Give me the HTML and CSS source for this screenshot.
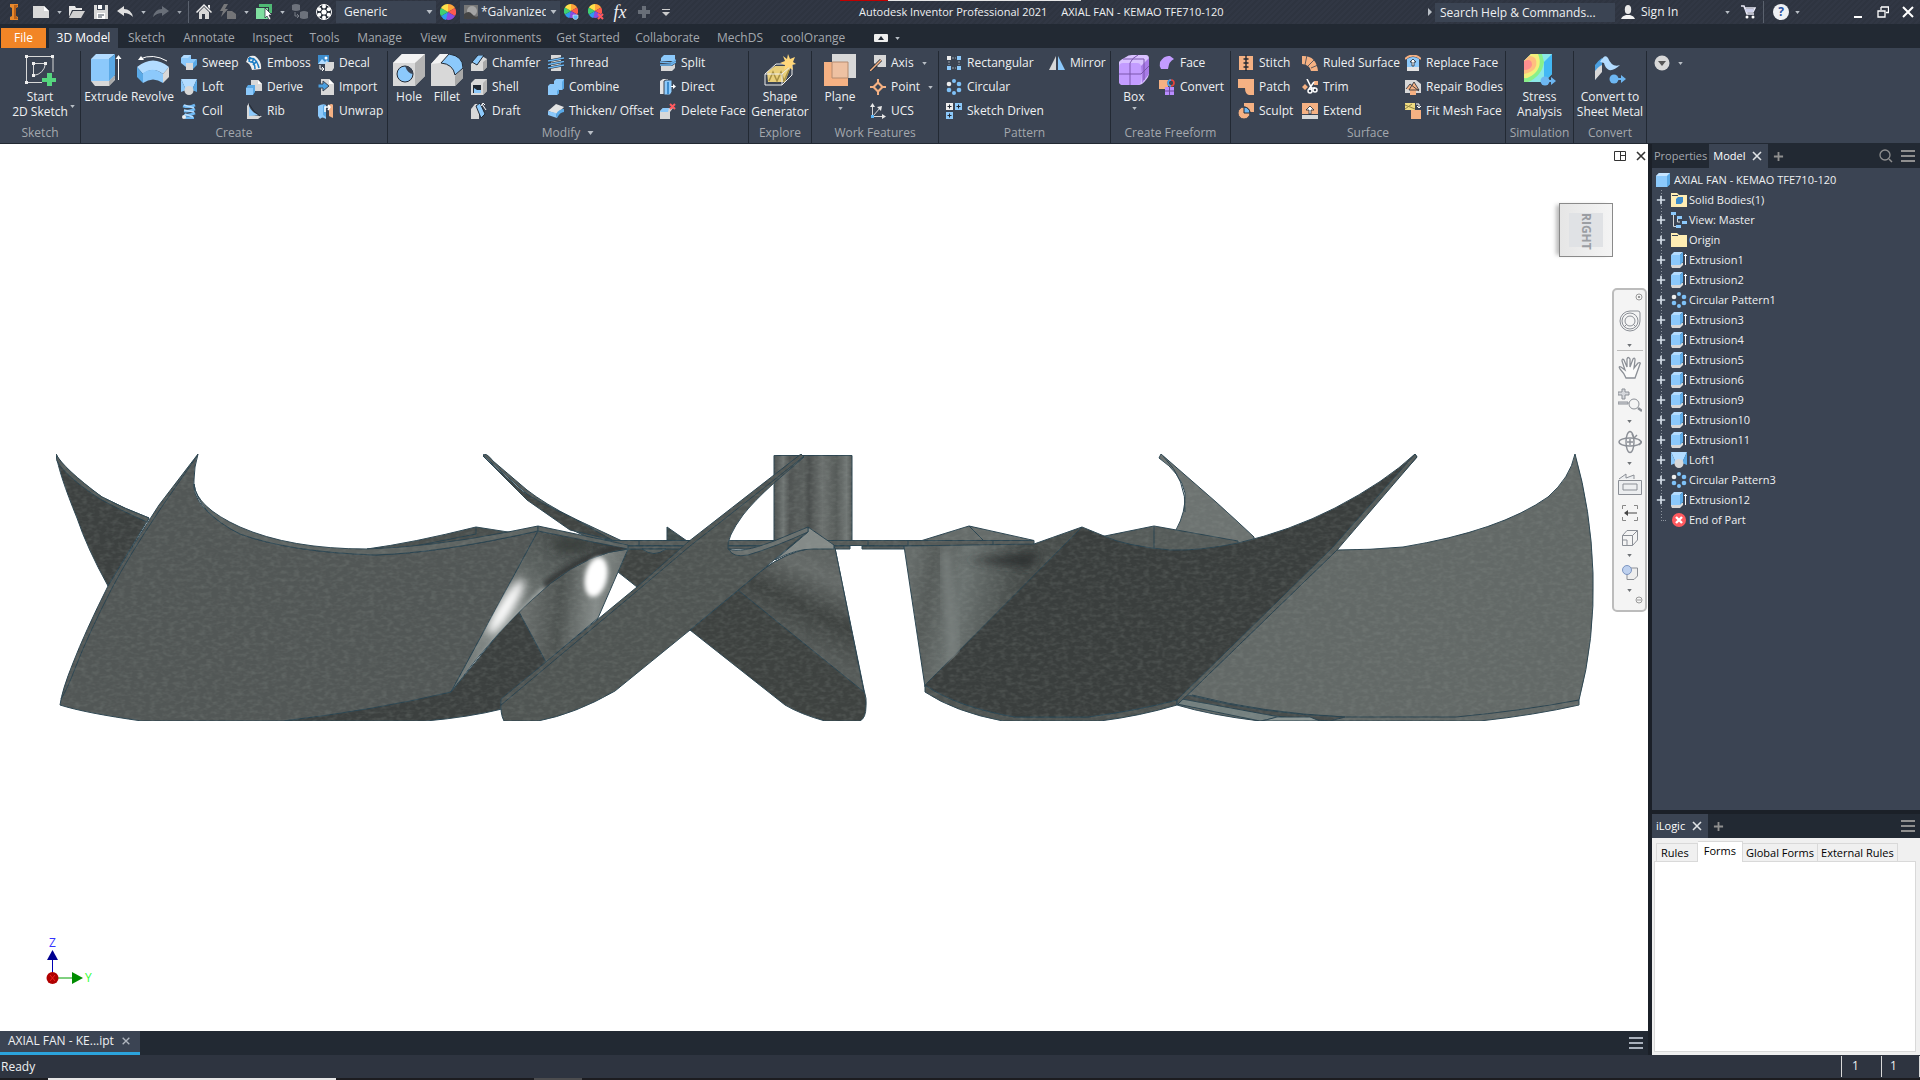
FILE: index.html
```html
<!DOCTYPE html>
<html lang="en">
<head>
<meta charset="utf-8">
<title>Autodesk Inventor Professional 2021 - AXIAL FAN - KEMAO TFE710-120</title>
<link rel="stylesheet" href="styles.css">
</head>
<body>
<svg class="defs" aria-hidden="true">
  <defs>
    <symbol id="caret" viewBox="0 0 6 4"><path d="M0 0H6L3 4Z" fill="#b9bfc6"/></symbol>
    <symbol id="cross" viewBox="0 0 12 12"><path d="M2 2L10 10M10 2L2 10" stroke="currentColor" stroke-width="1.6" fill="none"/></symbol>
    <symbol id="plus" viewBox="0 0 12 12"><path d="M1 6H11M6 1V11" stroke="currentColor" stroke-width="2" fill="none"/></symbol>
    <symbol id="burger" viewBox="0 0 14 12"><path d="M0 1H14M0 6H14M0 11H14" stroke="currentColor" stroke-width="2" fill="none"/></symbol>
    <symbol id="wheel" viewBox="0 0 16 16"><g transform="translate(8 8)"><path d="M0 0V-8A8 8 0 0 1 7 -4Z" fill="#ffa43a"/><path d="M0 0L7 -4A8 8 0 0 1 7 4Z" fill="#ff5a4e"/><path d="M0 0L7 4A8 8 0 0 1 0 8L-3 7Z" fill="#8a4be0"/><path d="M0 0L-2 8A8 8 0 0 1 -7 4Z" fill="#2f9bf0"/><path d="M0 0L-7 4A8 8 0 0 1 -7 -4Z" fill="#3fcf72"/><path d="M0 0L-7 -4A8 8 0 0 1 0 -8Z" fill="#ffe04a"/></g></symbol>

    <symbol id="extrude" viewBox="0 0 32 32"><path d="M1 27L5 32H19L25 26V22H1Z" fill="#d8d8d8"/><path d="M19 32L25 25V21L19 27Z" fill="#a9a9a9"/><path d="M1 5L6 0H25L19 5Z" fill="#b3dcff"/><path d="M1 5H19V27H1Z" fill="#8cc9fb"/><path d="M19 5L25 0V21L19 27Z" fill="#5aa9e6"/><path d="M28.500 26V3" stroke="#fff" fill="none"/><path d="M25.500 5L28.500 1L31.500 5Z" fill="#fff"/></symbol>
    <symbol id="extrusion" viewBox="0 0 16 16"><path d="M0 14L1 16H9L12 13V11H0Z" fill="#d8d8d8"/><path d="M0 3L3 0H12L9 3Z" fill="#b3dcff"/><path d="M0 3H9V13H0Z" fill="#8cc9fb"/><path d="M9 3L12 0V10L9 13Z" fill="#5aa9e6"/><path d="M14.500 13V2M13 3.500H16" stroke="#fff" fill="none"/></symbol>
    <symbol id="revolve" viewBox="0 0 32 32"><path d="M0 13Q16 0 32 13L26 20Q16 12 6 20Z" fill="#b3dcff"/><path d="M0 13L6 20V29L0 23Z" fill="#5aa9e6"/><path d="M6 19Q16 12 26 20V29Q16 22 6 29Z" fill="#8cc9fb"/><path d="M26 20L32 13V23L26 29Z" fill="#d8d8d8"/><path d="M3 5Q16 -1 30 7" stroke="#fff" fill="none"/><path d="M1 6L4 2L7 6Z" fill="#fff"/></symbol>
    <symbol id="start" viewBox="0 0 32 32"><g fill="none" stroke="#d8d8d8"><path d="M2.500 2V29M2 28.500H18M2 2.500H29V18"/><path d="M9.500 21.500V9.500H21.500Q20 20 9.500 21.500Z"/></g><g fill="#eee"><path d="M1 1h3v3H1zM27 1h3v3h-3zM1 27h3v3H1zM8 8h3v3H8zM20 8h3v3h-3zM8 20h3v3H8z"/></g><path d="M23 19h5v5h4v4h-4v4h-5v-4h-5v-4h5z" fill="#55d67e"/></symbol>
    <symbol id="sweep" viewBox="0 0 16 16"><path d="M0 3L3 0H10V4H16L13 8H5V12L0 8Z" fill="#8cc9fb"/><path d="M3 0H10L7 3H0Z" fill="#b3dcff"/><path d="M5 8H12V15H5Z" fill="#d8d8d8"/><path d="M12 8L16 4V10L12 14Z" fill="#5aa9e6"/></symbol>
    <symbol id="loft" viewBox="0 0 16 16"><path d="M0 0H16L11 11H5Z" fill="#b3dcff"/><path d="M0 0V13L5 11Z" fill="#8cc9fb"/><path d="M16 0V13L11 11Z" fill="#5aa9e6"/><circle cx="8" cy="11.500" r="4.500" fill="#d8d8d8"/></symbol>
    <symbol id="coil" viewBox="0 0 16 16"><path d="M2 3Q8 5 14 2M3 8Q8 9 14 6M3 12Q8 13 14 10M4 15H13" stroke="#6db7f2" stroke-width="2.600" fill="none"/><path d="M3 2L13 5M3 7L13 9M4 11L12 14" stroke="#b3dcff" stroke-width="1.500"/><circle cx="3" cy="14" r="2" fill="#eee"/></symbol>
    <symbol id="emboss" viewBox="0 0 16 16"><path d="M1 5Q2 0 9 1Q16 6 15 14L6 15Q4 8 0 7Z" fill="#eee"/><path d="M2 4Q10 1 13 13M4 7Q9 6 9 14M4 2L3 7M8 3L6 8M11 6L7 10" stroke="#1d7dc4" stroke-width="1.600" fill="none"/></symbol>
    <symbol id="derive" viewBox="0 0 16 16"><path d="M5 1H12L16 5V12H5Z" fill="#d8d8d8"/><path d="M12 1V5H16Z" fill="#fff"/><path d="M0 9L2 6H9V13L7 16H0Z" fill="#5aa9e6"/><path d="M0 9H7V16H0Z" fill="#8cc9fb"/></symbol>
    <symbol id="rib" viewBox="0 0 16 16"><path d="M1 3L3 0V12L16 13L12 16H1Z" fill="#d8d8d8"/><path d="M3 3Q6 10 13 12L3 13Z" fill="#8cc9fb"/><path d="M3 1Q7 9 14 13" stroke="#222933" fill="none"/></symbol>
    <symbol id="decal" viewBox="0 0 16 16"><path d="M0 0H11V9H0Z" fill="#3c8ccc"/><path d="M0 9L4 4L7 7L9 5L11 9Z" fill="#b3dcff"/><circle cx="8" cy="3" r="1.500" fill="#fff"/><path d="M7 9L9 7H16V13L14 16H7Z" fill="#d8d8d8"/><path d="M2 10V14H6M4 12L6 14L4 16" stroke="#fff" fill="none"/></symbol>
    <symbol id="import" viewBox="0 0 16 16"><path d="M3 0H11L16 5V16H3Z" fill="#d8d8d8"/><path d="M11 0V5H16Z" fill="#fff"/><path d="M0 5H5V2L11 7L5 12V9H0Z" fill="#4a9fe0" stroke="#3b4453"/></symbol>
    <symbol id="unwrap" viewBox="0 0 16 16"><path d="M0 3Q5 0 8 2V16Q4 13 2 16L0 13Z" fill="#8cc9fb"/><path d="M5 2L8 3V14L5 12Z" fill="#5aa9e6"/><path d="M11 2Q14 0 15 2V15L11 13Z" fill="#f5b183"/><path d="M7 9V4H12M10 2L12 4L10 7" stroke="#fff" stroke-width="1.500" fill="none"/></symbol>
    <symbol id="cube" viewBox="0 0 32 32"><path d="M0 9L9 0H32V22L22 32H0Z" fill="#d8d8d8"/><path d="M0 9L9 0H32L22 9Z" fill="#f3f3f3"/><path d="M22 9L32 0V22L22 32Z" fill="#b4b4b4"/></symbol>
    <symbol id="hole" viewBox="0 0 32 32"><use href="#cube"/><circle cx="12" cy="20" r="8" fill="#8cc9fb" stroke="#222933"/><path d="M12 12A8 8 0 0 1 20 20Q15 20 12 12Z" fill="#3b4453"/></symbol>
    <symbol id="fillet" viewBox="0 0 32 32"><path d="M0 10L9 0H20L32 14V24L24 32H0Z" fill="#d8d8d8"/><path d="M24 22L32 14V24L24 32Z" fill="#a9a9a9"/><path d="M10 9L18 0Q32 2 32 14L24 21Q22 10 10 9Z" fill="#8cc9fb" stroke="#222933"/><path d="M0 10L9 0H17L9 9Z" fill="#f3f3f3"/></symbol>
    <symbol id="chamfer" viewBox="0 0 16 16"><path d="M0 9L9 0L16 4V12L12 16H0Z" fill="#d8d8d8"/><path d="M1 7L7 0H13L6 10Z" fill="#8cc9fb" stroke="#222933"/><path d="M12 7L16 4V12L12 16Z" fill="#a9a9a9"/></symbol>
    <symbol id="shell" viewBox="0 0 16 16"><path d="M0 4L4 0H16V12L12 16H0Z" fill="#d8d8d8"/><path d="M12 4L16 0V12L12 16Z" fill="#b4b4b4"/><path d="M2 6H10V14H2Z" fill="#1f2732"/><path d="M3 9L6 11V14H3ZM6 11H10V14H6Z" fill="#8cc9fb"/></symbol>
    <symbol id="draft" viewBox="0 0 16 16"><path d="M0 6L4 1H8V16H0Z" fill="#d8d8d8"/><path d="M5 3L9 0L14 11L10 15Z" fill="#8cc9fb" stroke="#222933"/><path d="M11 1L15 7M10 3L12 0L14 2" stroke="#fff" fill="none"/></symbol>
    <symbol id="thread" viewBox="0 0 16 16"><path d="M3 0H13V16H3Z" fill="#d8d8d8"/><path d="M0 6L16 3M0 9.500L16 6.500M0 13L16 10" stroke="#222933" stroke-width="2.600"/><path d="M0 6L16 3M0 9.500L16 6.500M0 13L16 10" stroke="#6db7f2" stroke-width="1.600"/></symbol>
    <symbol id="combine" viewBox="0 0 16 16"><path d="M6 2L8 0H16V9L14 11H11V14L9 16H0V7L2 5H6Z" fill="#8cc9fb"/><path d="M14 3L16 0V9L14 11ZM9 12L11 10V14L9 16Z" fill="#5aa9e6"/></symbol>
    <symbol id="thicken" viewBox="0 0 16 16"><path d="M0 8L8 1L16 4L9 11Z" fill="#e3e3e3"/><path d="M0 8L8 10L9 15L0 12Z" fill="#8cc9fb"/><path d="M8 11Q11 6 16 6V9Q12 9 9 15Z" fill="#5aa9e6"/></symbol>
    <symbol id="split" viewBox="0 0 16 16"><path d="M1 3L4 0H15V6H1Z" fill="#8cc9fb"/><path d="M0 7L11 8L16 5M0 10L11 10L16 7" stroke="#6db7f2" stroke-width="1.500" fill="none"/><path d="M1 11H12L15 9V13L12 16H1Z" fill="#d8d8d8"/></symbol>
    <symbol id="direct" viewBox="0 0 16 16"><path d="M0 2L3 0H8V15H0Z" fill="#e3e3e3"/><path d="M4 2L6 1H12V13L10 16H4Z" fill="#8cc9fb" stroke="#3b4453"/><path d="M8 3V15" stroke="#3c8ccc" stroke-width="2"/><path d="M11 7.500H14" stroke="#fff"/><path d="M13 5L16 7.500L13 10Z" fill="#fff"/></symbol>
    <symbol id="delface" viewBox="0 0 16 16"><path d="M0 8L3 5H13L10 9V16H0Z" fill="#d8d8d8"/><path d="M1 7L3 5H9L8 9H0Z" fill="#8cc9fb"/><path d="M10 1L15 6M15 1L10 6" stroke="#ff5a5f" stroke-width="2"/></symbol>
    <symbol id="shape" viewBox="0 0 32 32"><path d="M3 18L11 12H27L21 28H4Z" fill="#e9cf7b"/><path d="M5 27L9 18L13 27L17 18L20 27L25 16" stroke="#a78f43" fill="none" stroke-width="1.500"/><path d="M1 20L12 10H28V21L18 31H1ZM1 20H18V31M18 20L28 11" stroke="#eee" fill="none"/><path d="M24 0L26 5L31 3L29 8L32 10L28 11L29 16L24 13L20 16L21 11L16 9L21 7L19 2L23 5Z" fill="#ffd77a"/></symbol>
    <symbol id="plane" viewBox="0 0 32 32"><path d="M8 0H32V24H8Z" fill="#d8d8d8"/><path d="M0 8H24V32H0Z" fill="#f5b183"/><path d="M8 8H24V24H8Z" fill="#eec1a2" stroke="#b58c70"/></symbol>
    <symbol id="axis" viewBox="0 0 16 16"><path d="M4 0H16V12H8L4 8Z" fill="#d8d8d8"/><path d="M0 16L11 5" stroke="#222933" stroke-width="3"/><path d="M0 16L11 5" stroke="#f5b183" stroke-width="1.500"/></symbol>
    <symbol id="point" viewBox="0 0 16 16"><path d="M8 0V16M0 8H16" stroke="#f5b183" stroke-width="2"/><path d="M8 2L14 8L8 14L2 8Z" fill="#f5b183"/><path d="M8 5L11 8L8 11L5 8Z" fill="#3b4453"/></symbol>
    <symbol id="ucs" viewBox="0 0 16 16"><path d="M2.500 14V2M2 13.500H14M3 13L10 5" stroke="#d8d8d8" fill="none"/><path d="M0 4L2.500 0L5 4ZM12 11L16 13.500L12 16ZM7 4L12 3L11 8Z" fill="#e8e8e8"/><path d="M1 12h3v3H1z" fill="#5ab4f5"/></symbol>
    <symbol id="rect" viewBox="0 0 16 16"><g fill="#8cc9fb"><path d="M11 1h4v4h-4zM1 11h4v4H1zM11 11h4v4h-4z"/></g><path d="M1 1h4v4H1z" fill="#eee"/><path d="M6 3H10M3 6V10M13 6V10M6 13H10" stroke="#9ba3ad" stroke-dasharray="2 1"/></symbol>
    <symbol id="circ" viewBox="0 0 16 16"><g fill="#7fc1f7"><circle cx="8" cy="2" r="2"/><circle cx="13" cy="5" r="2.300"/><circle cx="13" cy="11" r="2.300"/><circle cx="8" cy="14" r="2"/><circle cx="3" cy="11" r="2.300"/></g><circle cx="3" cy="5" r="2.300" fill="#eee"/></symbol>
    <symbol id="driven" viewBox="0 0 16 16"><path d="M0 0h7v7H0z" fill="#eee"/><path d="M9 0h7v7H9zM0 9h7v7H0z" fill="#8cc9fb"/><path d="M1.500 3.500h4M3.500 1.500v4M10.500 3.500h4M12.500 1.500v4M1.500 12.500h4M3.500 10.500v4" stroke="#222933"/></symbol>
    <symbol id="mirror" viewBox="0 0 16 16"><path d="M7 1V15H0Z" fill="#d8d8d8"/><path d="M9 1V15H16Z" fill="#8cc9fb"/></symbol>
    <symbol id="box" viewBox="0 0 32 32"><path d="M1 8Q2 6 8 3Q10 1 14 1H28Q31 1 31 5V20Q30 25 24 30Q22 31 20 31H5Q1 31 1 27Z" fill="#d9c2ff"/><rect x="1" y="9" width="22" height="22" rx="4" fill="#c39cff"/><path d="M23 12L31 4V20L24 29Z" fill="#a97be8"/><path d="M12 9V31M1 20H23L31 12M12 9Q14 4 20 1M5 5H26M26 5V26" stroke="#7a56ad" fill="none"/></symbol>
    <symbol id="face" viewBox="0 0 16 16"><path d="M1 7Q5 0 11 1L15 4Q10 6 9 14L2 14Q0 11 1 7Z" fill="#c39cff"/></symbol>
    <symbol id="convert" viewBox="0 0 16 16"><path d="M0 1H9V10H0Z" fill="#f5b183"/><path d="M6 8H15V16H6Z" fill="#b98cff"/><path d="M10.500 8V16M6 12H15" stroke="#6a4a9a"/><circle cx="12" cy="4" r="3" fill="none" stroke="#e8443c" stroke-width="1.700"/><path d="M12 1A3 3 0 0 0 12 7" fill="none" stroke="#3fa8f0" stroke-width="1.700"/></symbol>
    <symbol id="stitch" viewBox="0 0 16 16"><path d="M1 1H15V15H1Z" fill="#f5b183"/><path d="M8 0V16M5.500 4H10.500M5.500 8H10.500M5.500 12H10.500" stroke="#222933" stroke-width="1.400"/></symbol>
    <symbol id="patch" viewBox="0 0 16 16"><path d="M0 0H16V16H11Q7 15 7 9H0Z" fill="#f5b183"/></symbol>
    <symbol id="sculpt" viewBox="0 0 16 16"><path d="M6 0H16V9H6Z" fill="#f5b183"/><circle cx="6" cy="10" r="6" fill="#f5b183" stroke="#3b4453"/><path d="M6 4V10H12A6 6 0 0 0 6 4Z" fill="#6db7f2" stroke="#222933"/></symbol>
    <symbol id="ruled" viewBox="0 0 16 16"><path d="M0 1Q14 0 16 16H9Q8 10 0 9Z" fill="#f5b183"/><path d="M5 0L3 10M12 5L6 11M16 10L9 13" stroke="#3b4453" stroke-width=".8"/></symbol>
    <symbol id="trim" viewBox="0 0 16 16"><path d="M3 5L6 8L3 11L0 8ZM12 2H16V6H12Z" fill="#f5b183"/><path d="M5 0L10 10M12 3L7 10M9 9H13" stroke="#fff" stroke-width="1.600"/><circle cx="8" cy="12" r="2" fill="none" stroke="#fff" stroke-width="1.500"/><circle cx="13" cy="11" r="2" fill="none" stroke="#fff" stroke-width="1.500"/></symbol>
    <symbol id="extend" viewBox="0 0 16 16"><path d="M0 0H16V11H0Z" fill="#f5b183"/><path d="M0 12H16V16H0Z" fill="#d8d8d8"/><path d="M8 3L12 7H9V11H7V7H4Z" fill="#fff" stroke="#222933" stroke-width=".8"/></symbol>
    <symbol id="replace" viewBox="0 0 16 16"><path d="M0 4Q8 -3 16 4" stroke="#f5b183" stroke-width="2" fill="none"/><path d="M2 4Q8 0 14 4V12H2Z" fill="#8cc9fb"/><path d="M2 12H14V16H2Z" fill="#e3e3e3"/><path d="M8 4L11 7H9V11H7V7H5Z" fill="#fff" stroke="#222933" stroke-width=".8"/></symbol>
    <symbol id="repair" viewBox="0 0 16 16"><path d="M0 1H11L16 5V14H0Z" fill="#d8d8d8"/><path d="M5 9V16H11V9Z" fill="#f5b183"/><path d="M1 10L5 5L14 12M4 11L9 3L14 11Z" stroke="#222933" fill="#f5b183" stroke-width=".8"/></symbol>
    <symbol id="mesh" viewBox="0 0 16 16"><path d="M0 0H10V7H0Z" fill="#f0dc82"/><path d="M0 2L10 6M0 6L7 1" stroke="#8f8243"/><path d="M6 7H16V16H6Z" fill="#f5b183"/><path d="M11 1H14V5M12 3L14 5L16 3" stroke="#fff" fill="none"/></symbol>
    <symbol id="stress" viewBox="0 0 32 32"><path d="M0 7L7 0H28V20L20 28H0Z" fill="#8be8e8"/><path d="M20 8L28 0V20L20 28Z" fill="#42b8f5"/><path d="M0 7L7 0H18L20 8Q18 22 4 28H0Z" fill="#8af08a"/><path d="M0 7L7 0H14Q19 12 10 20Q4 25 0 24Z" fill="#f3f07c"/><path d="M0 7L5 2Q14 2 12 12Q10 18 0 20Z" fill="#ffbf7f"/><path d="M0 7Q8 4 8 11Q7 16 0 16Z" fill="#ff8f8f"/><circle cx="21" cy="27" r="4.500" fill="#6db7f2"/><path d="M24 26H27V23L32 27L27 31V28H24Z" fill="#6db7f2"/></symbol>
    <symbol id="sheet" viewBox="0 0 32 32"><path d="M1 11Q5 6 8 4V16L1 26Z" fill="#4a9fe0"/><path d="M1 17Q5 12 8 11V18L1 26Z" fill="#d8d8d8"/><path d="M6 8Q11 -1 14 4Q18 14 26 11Q20 17 15 16Q11 14 10 9Z" fill="#b3dcff"/><circle cx="20" cy="25" r="4.500" fill="#6db7f2"/><path d="M24 24H27V21L32 25L27 29V26H24Z" fill="#6db7f2"/></symbol>
    <symbol id="folder" viewBox="0 0 16 16"><path d="M0 1H6L8 3H16V15H0Z" fill="#ffedb3"/><path d="M1 3.500H7" stroke="#3b4453"/></symbol>
    <symbol id="solid" viewBox="0 0 16 16"><use href="#folder"/><path d="M5 7L7 5H12V10L10 12H5Z" fill="#3c8ccc"/></symbol>
    <symbol id="view" viewBox="0 0 16 16"><path d="M2.500 3V14.500H5M6.500 6V10H9" stroke="#d8d8d8" fill="none"/><path d="M0 0h5v3H0zM6 4h5v3H6zM11 9h5v3h-5zM5 13h5v3H5z" fill="#8cc9fb"/></symbol>
    <symbol id="part" viewBox="0 0 16 16"><path d="M1 4L4 1H15V12L12 15H1Z" fill="#8cc9fb"/><path d="M1 4L4 1H15L12 4Z" fill="#c5e4ff"/><path d="M12 4L15 1V12L12 15Z" fill="#5aa9e6"/></symbol>
    <symbol id="end" viewBox="0 0 16 16"><circle cx="8" cy="8" r="7" fill="#ff5a5f"/><path d="M5 5L11 11M11 5L5 11" stroke="#fff" stroke-width="2.400"/></symbol>
  </defs>
</svg>

<div class="app">
  <header class="titlebar">
    <div class="quick">
      <svg class="logo" viewBox="0 0 10 16"><path d="M1 0H9V3L7 4V12L9 13V16H1V13L3 12V4L1 3Z" fill="#e8892c"/><path d="M5 1H9L7 4V12L9 15H5Z" fill="#b8601a"/></svg>
      <button class="q" aria-label="New"><svg class="i16" viewBox="0 0 16 16"><path d="M0 2H11L16 7V14H0Z" fill="#d8d8d8"/><path d="M11 2V7H16Z" fill="#fff"/></svg></button>
      <button class="drop" aria-label="New options"><svg><use href="#caret"/></svg></button>
      <button class="q" aria-label="Open"><svg class="i16" viewBox="0 0 16 16"><path d="M0 2H6L7 4H13V6H3L0 13Z" fill="#e8e8e8"/><path d="M4 7H16L12 14H0Z" fill="#d0d0d0"/></svg></button>
      <button class="q" aria-label="Save"><svg class="i16" viewBox="0 0 16 16"><path d="M1 1H15V15H1Z" fill="#d8d8d8"/><path d="M4 1H12V6H4Z" fill="#3b4453"/><path d="M5 1H9V5H5ZM4 9H12V15H4Z" fill="#fff"/><path d="M5 11H11M5 13H9" stroke="#3b4453"/></svg></button>
      <button class="q" aria-label="Undo"><svg class="i16" viewBox="0 0 16 16"><path d="M0 7L7 2V5Q14 5 16 13Q12 9 7 9V12Z" fill="#e0e0e0"/></svg></button>
      <button class="drop" aria-label="Undo list"><svg><use href="#caret"/></svg></button>
      <button class="q dim" aria-label="Redo"><svg class="i16" viewBox="0 0 16 16"><path d="M16 7L9 2V5Q2 5 0 13Q4 9 9 9V12Z" fill="#777d86"/></svg></button>
      <button class="drop dim" aria-label="Redo list"><svg><use href="#caret"/></svg></button>
      <span class="vr"></span>
      <button class="q" aria-label="Home"><svg class="i16" viewBox="0 0 16 16"><path d="M8 0L16 8L15 9L8 2L1 9L0 8Z" fill="#eee"/><path d="M3 8L8 3L13 8V15H9V10H6V15H3Z" fill="#d8d8d8"/><path d="M12 1h2v4l-2-2z" fill="#eee"/></svg></button>
      <button class="q dim" aria-label="Update"><svg class="i16" viewBox="0 0 16 16"><path d="M4 0H8L5 5H8L1 13L3 7H0Z" fill="#888"/><path d="M7 7H12L16 10V15H7Z" fill="#858585"/></svg></button>
      <button class="drop" aria-label="Update options"><svg><use href="#caret"/></svg></button>
      <button class="q" aria-label="Select"><svg class="i16" viewBox="0 0 16 16"><path d="M3 0H16V9H13V3H3Z" fill="#4fb974"/><path d="M0 4H12V15H0Z" fill="#7fe0a0"/><path d="M9 4L16 11H13L15 15L13 16L11 12L9 14Z" fill="#fff" stroke="#222933" stroke-width=".7"/></svg></button>
      <button class="drop" aria-label="Selection filter"><svg><use href="#caret"/></svg></button>
      <button class="q dim" aria-label="Replace"><svg class="i16" viewBox="0 0 16 16"><path d="M0 1Q4 -1 8 1V6Q4 8 0 6ZM8 8Q12 6 16 8V14Q12 16 8 14Z" fill="#7c818a"/><path d="M3 8V12H7M5 10L7 12L5 14" stroke="#8b9098" fill="none"/></svg></button>
      <button class="q" aria-label="Material"><svg class="i16" viewBox="0 0 16 16"><circle cx="8" cy="8" r="7.500" fill="#222933" stroke="#fff"/><g fill="#fff"><circle cx="8" cy="8" r="2.600"/><circle cx="8" cy="2.500" r="2"/><circle cx="8" cy="13.500" r="2"/><circle cx="3.300" cy="5.300" r="2"/><circle cx="12.700" cy="5.300" r="2"/><circle cx="3.300" cy="10.700" r="2"/><circle cx="12.700" cy="10.700" r="2"/></g></svg></button>
      <span class="combo"><select aria-label="Material"><option>Generic</option></select><svg class="combo-caret"><use href="#caret"/></svg></span>
      <button class="q" aria-label="Appearance"><svg class="i16"><use href="#wheel"/></svg></button>
      <span class="combo combo-b"><svg class="ball" viewBox="0 0 14 14"><path d="M0 0H14V14H0Z" fill="#777"/><circle cx="8" cy="6" r="5" fill="#a4a4a4"/><path d="M0 9Q5 5 8 9T14 11V14H0Z" fill="#444"/></svg><select aria-label="Appearance"><option>*Galvanized</option></select><svg class="combo-caret"><use href="#caret"/></svg></span>
      <button class="q" aria-label="Adjust"><svg class="i16" viewBox="0 0 16 16"><use href="#wheel" width="14" height="14"/><path d="M9 11H14V14L11.500 16L9 14Z" fill="#5ab4f5" stroke="#eee" stroke-width=".6"/></svg></button>
      <button class="q" aria-label="Clear"><svg class="i16" viewBox="0 0 16 16"><use href="#wheel" width="14" height="14"/><path d="M10 10L15 15M15 10L10 15" stroke="#ff5a5f" stroke-width="2"/></svg></button>
      <button class="q fx" aria-label="Parameters">fx</button>
      <button class="q dim" aria-label="Add"><svg class="i12" viewBox="0 0 12 12"><path d="M4 0h4v4h4v4H8v4H4V8H0V4h4z" fill="#777d86"/></svg></button>
      <button class="drop more" aria-label="Customize"><svg viewBox="0 0 8 7"><path d="M0 0.500H8" stroke="#ccc"/><path d="M0 3H8L4 7Z" fill="#ccc"/></svg></button>
    </div>
    <div class="titles"><span>Autodesk Inventor Professional 2021</span><span>AXIAL FAN - KEMAO TFE710-120</span></div>
    <div class="account">
      <svg class="tri" viewBox="0 0 4 8"><path d="M0 0L4 4L0 8Z" fill="#b9bfc6"/></svg>
      <input class="search" type="text" aria-label="Search" placeholder="Search Help &amp; Commands...">
      <button class="signin"><svg class="i14" viewBox="0 0 14 14"><ellipse cx="7" cy="4.500" rx="3.200" ry="4.500" fill="#e8e8e8"/><path d="M0 14Q1 11 5 10H9Q13 11 14 14Z" fill="#f4f4f4"/></svg>Sign In<svg class="dropcaret"><use href="#caret"/></svg></button>
      <button class="q" aria-label="App store"><svg class="i16" viewBox="0 0 16 16"><path d="M1 2H4L7 10H14M4 4H15L13 8H6" stroke="#e8e8f4" stroke-width="1.600" fill="none"/><path d="M5 5H14L13 8H6Z" fill="#cdd0ea"/><circle cx="7" cy="13" r="1.500" fill="#fff"/><circle cx="13" cy="13" r="1.500" fill="#fff"/></svg></button>
      <span class="vr"></span>
      <button class="help" aria-label="Help">?</button>
      <button class="drop" aria-label="Help options"><svg><use href="#caret"/></svg></button>
      <button class="win win-min" aria-label="Minimize"><svg viewBox="0 0 12 12"><path d="M2 11H10" stroke="#fff" stroke-width="2"/></svg></button>
      <button class="win" aria-label="Restore"><svg viewBox="0 0 12 12"><path d="M4 1H11.500V6.500H9M4 1V4M1 5H8V11H1Z" stroke="#fff" fill="none" stroke-width="1.300"/></svg></button>
      <button class="win" aria-label="Close"><svg viewBox="0 0 12 12"><path d="M1 1L11 11M11 1L1 11" stroke="#fff" stroke-width="2"/></svg></button>
    </div>
    <div class="topstrip"></div>
  </header>

  <nav class="tabs" aria-label="Ribbon">
    <button class="file">File</button><button class="on">3D Model</button><button>Sketch</button><button>Annotate</button><button>Inspect</button><button>Tools</button><button>Manage</button><button>View</button><button>Environments</button><button>Get Started</button><button>Collaborate</button><button>MechDS</button><button>coolOrange</button>
    <button class="mini" aria-label="Minimize ribbon"><svg class="mini-box" viewBox="0 0 14 8"><rect width="14" height="8" rx="1" fill="#eee"/><path d="M4 6L7 2L10 6Z" fill="#222933"/></svg><svg class="mini-caret"><use href="#caret"/></svg></button>
  </nav>

  <section class="ribbon">
    <div class="group g-sketch"><div class="body"><button class="big"><svg><use href="#start"/></svg><span>Start<br>2D Sketch</span><svg class="side"><use href="#caret"/></svg></button></div><h2>Sketch</h2></div>
    <div class="group g-create"><div class="body">
      <button class="big"><svg><use href="#extrude"/></svg><span>Extrude</span></button>
      <button class="big"><svg><use href="#revolve"/></svg><span>Revolve</span></button>
      <div class="tools pad"><button><svg><use href="#sweep"/></svg>Sweep</button><button><svg><use href="#loft"/></svg>Loft</button><button><svg><use href="#coil"/></svg>Coil</button></div>
      <div class="tools"><button><svg><use href="#emboss"/></svg>Emboss</button><button><svg><use href="#derive"/></svg>Derive</button><button><svg><use href="#rib"/></svg>Rib</button></div>
      <div class="tools"><button><svg><use href="#decal"/></svg>Decal</button><button><svg><use href="#import"/></svg>Import</button><button><svg><use href="#unwrap"/></svg>Unwrap</button></div>
    </div><h2>Create</h2></div>
    <div class="group g-modify"><div class="body">
      <button class="big"><svg><use href="#hole"/></svg><span>Hole</span></button>
      <button class="big"><svg><use href="#fillet"/></svg><span>Fillet</span></button>
      <div class="tools pad"><button><svg><use href="#chamfer"/></svg>Chamfer</button><button><svg><use href="#shell"/></svg>Shell</button><button><svg><use href="#draft"/></svg>Draft</button></div>
      <div class="tools"><button><svg><use href="#thread"/></svg>Thread</button><button><svg><use href="#combine"/></svg>Combine</button><button><svg><use href="#thicken"/></svg>Thicken/ Offset</button></div>
      <div class="tools"><button><svg><use href="#split"/></svg>Split</button><button><svg><use href="#direct"/></svg>Direct</button><button><svg><use href="#delface"/></svg>Delete Face</button></div>
    </div><h2>Modify <svg class="title-caret"><use href="#caret"/></svg></h2></div>
    <div class="group g-explore"><div class="body"><button class="big"><svg><use href="#shape"/></svg><span>Shape<br>Generator</span></button></div><h2>Explore</h2></div>
    <div class="group g-work"><div class="body">
      <button class="big"><svg><use href="#plane"/></svg><span>Plane</span><svg class="under"><use href="#caret"/></svg></button>
      <div class="tools tight"><button><svg><use href="#axis"/></svg>Axis<svg class="dropcaret"><use href="#caret"/></svg></button><button><svg><use href="#point"/></svg>Point<svg class="dropcaret"><use href="#caret"/></svg></button><button><svg><use href="#ucs"/></svg>UCS</button></div>
    </div><h2>Work Features</h2></div>
    <div class="group g-pattern"><div class="body">
      <div class="tools pad"><button><svg><use href="#rect"/></svg>Rectangular</button><button><svg><use href="#circ"/></svg>Circular</button><button><svg><use href="#driven"/></svg>Sketch Driven</button></div>
      <div class="tools"><button><svg><use href="#mirror"/></svg>Mirror</button></div>
    </div><h2>Pattern</h2></div>
    <div class="group g-free"><div class="body">
      <button class="big"><svg><use href="#box"/></svg><span>Box</span><svg class="under"><use href="#caret"/></svg></button>
      <div class="tools tight"><button><svg><use href="#face"/></svg>Face</button><button><svg><use href="#convert"/></svg>Convert</button></div>
    </div><h2>Create Freeform</h2></div>
    <div class="group g-surface"><div class="body">
      <div class="tools pad"><button><svg><use href="#stitch"/></svg>Stitch</button><button><svg><use href="#patch"/></svg>Patch</button><button><svg><use href="#sculpt"/></svg>Sculpt</button></div>
      <div class="tools"><button><svg><use href="#ruled"/></svg>Ruled Surface</button><button><svg><use href="#trim"/></svg>Trim</button><button><svg><use href="#extend"/></svg>Extend</button></div>
      <div class="tools"><button><svg><use href="#replace"/></svg>Replace Face</button><button><svg><use href="#repair"/></svg>Repair Bodies</button><button><svg><use href="#mesh"/></svg>Fit Mesh Face</button></div>
    </div><h2>Surface</h2></div>
    <div class="group g-sim"><div class="body"><button class="big"><svg><use href="#stress"/></svg><span>Stress<br>Analysis</span></button></div><h2>Simulation</h2></div>
    <div class="group g-conv"><div class="body"><button class="big"><svg><use href="#sheet"/></svg><span>Convert to<br>Sheet Metal</span></button></div><h2>Convert</h2></div>
    <div class="tools pad"><button aria-label="Panels"><svg viewBox="0 0 16 16"><circle cx="8" cy="8" r="7.500" fill="#d8d8d8"/><path d="M4 6H12L8 11Z" fill="#555"/></svg><svg class="dropcaret"><use href="#caret"/></svg></button></div>
  </section>

  <main class="work">
    <section class="left">
      <div class="canvas">
        <svg class="fan" viewBox="0 144 1648 887" role="img" aria-label="Axial fan, side view">
          <defs>
            <filter id="grain" x="0" y="0" width="1" height="1" color-interpolation-filters="sRGB">
              <feTurbulence type="fractalNoise" baseFrequency=".16 .28" numOctaves="2" seed="4"/>
              <feColorMatrix values="0 0 0 0 .62  0 0 0 0 .65  0 0 0 0 .63  .42 0 0 0 -.17"/>
              <feComposite in2="SourceGraphic" operator="in" result="n"/>
              <feMerge><feMergeNode in="SourceGraphic"/><feMergeNode in="n"/></feMerge>
            </filter>
            <filter id="soft" x="-50%" y="-50%" width="200%" height="200%"><feGaussianBlur stdDeviation="4"/></filter>
            <filter id="glow" x="-50%" y="-50%" width="200%" height="200%"><feGaussianBlur stdDeviation="2"/></filter>
            <linearGradient id="cyl"><stop offset="0" stop-color="#4c5150"/><stop offset=".12" stop-color="#6f7573"/><stop offset=".2" stop-color="#505453"/><stop offset=".38" stop-color="#5a5f5d"/><stop offset=".45" stop-color="#4a4e4d"/><stop offset=".62" stop-color="#6c716f"/><stop offset=".8" stop-color="#565b59"/><stop offset=".93" stop-color="#727876"/><stop offset="1" stop-color="#555a58"/></linearGradient>
            <linearGradient id="faceI" gradientUnits="userSpaceOnUse" x1="835" y1="548" x2="790" y2="640"><stop offset="0" stop-color="#5a5f5d"/><stop offset=".3" stop-color="#666b69"/><stop offset=".65" stop-color="#3f4341"/><stop offset="1" stop-color="#565b59"/></linearGradient>
            <linearGradient id="faceD" gradientUnits="userSpaceOnUse" x1="590" y1="535" x2="460" y2="690"><stop offset="0" stop-color="#3e4342"/><stop offset=".3" stop-color="#5c6260"/><stop offset=".6" stop-color="#8a908e"/><stop offset="1" stop-color="#6b7270"/></linearGradient>
            <linearGradient id="faceE" gradientUnits="userSpaceOnUse" x1="525" y1="600" x2="625" y2="610"><stop offset="0" stop-color="#6b706e"/><stop offset=".35" stop-color="#4e5351"/><stop offset=".7" stop-color="#858b89"/><stop offset="1" stop-color="#656b69"/></linearGradient>
            <linearGradient id="faceO" gradientUnits="userSpaceOnUse" x1="905" y1="600" x2="1010" y2="620"><stop offset="0" stop-color="#666c6a"/><stop offset=".2" stop-color="#565b59"/><stop offset=".5" stop-color="#6c7371"/><stop offset="1" stop-color="#484d4b"/></linearGradient>
            <clipPath id="clipD"><path d="M538 531L451 692Q500 625 551 583Q590 552 628 549Z"/></clipPath>
            <clipPath id="clipO"><path d="M904 546L925 687L1082 527L1034 544Z"/></clipPath>
          </defs>
          <g stroke="#2b4450" stroke-width="1" stroke-linejoin="round" filter="url(#grain)">
            <path d="M56 454Q63 470 102 497Q125 509 149 518L108 586Q87 548 77 518Q59 474 56 454Z" fill="#3d4140"/>
            <path d="M56 454Q63 468 102 497Q125 509 149 518L147 522Q120 510 100 499Q65 476 57 461Z" fill="#555b59"/>
            <path d="M367 549Q412 543 476 527L508 532L540 537L420 550Z" fill="#4a4f4d"/>
            <path d="M476 527V534L400 549" fill="none"/>
            <path d="M283 721L451 692L518 610L546 662L502 700V709Q470 717 426 721Z" fill="#3c403f"/>
            <path d="M483 455Q486 452 493 461L527 490Q545 504 573 518L622 541L590 538Q568 529 560 522L527 494Z" fill="#555a58"/>
            <path d="M483 456L527 500L570 530L612 540L573 518Q540 503 522 491Z" fill="#414543"/>
            <path d="M628 549L618 572L637 587L690 545Z" fill="#404442"/>
            <path d="M667 527L687 541H667Z" fill="#3e4a4a"/>
            <path d="M774 455.500H852V541H774Z" fill="url(#cyl)"/>
            <path d="M588 540.500H1034V545.500H600Z" fill="#565b59"/>
            <path d="M624 546H850V549H624ZM862 546H904V549H862Z" fill="#565b59"/>
            <path d="M642 549Q654 558 666 549Z" fill="#5a605e"/>
            <path d="M639 541V546M868 541V546M908 541V546M993 541V546" fill="none"/>
            <path d="M518 610L546 662L598 618L628 549Q590 552 551 583Z" fill="url(#faceE)"/>
            <path d="M198 454L159 505Q128 553 108 586Q85 632 73 663Q62 690 60 705Q85 713 142 721H283Q375 710 451 692L538 531Q440 553 375 555Q290 552 240 534Q190 508 194 480Q194 467 198 454Z" fill="#525756"/>
            <path d="M197 456L161 508Q128 557 111 590Q88 635 76 666Q67 690 61 699" fill="none"/>
            <path d="M194 484Q196 507 240 527Q290 549 367 549Q430 547 508 532L538 526V531Q440 553 375 555Q290 552 240 534Q198 513 194 484Z" fill="#5e6462"/>
            <path d="M538 531L451 692Q500 625 551 583Q590 552 628 549Z" fill="url(#faceD)"/>
            <path d="M538 526V531L628 549V545Z" fill="#5d6361"/>
            <path d="M690 630L785 705Q800 714 825 721H860Q866 718 866 706Q867 699 864 690L835 548H813Q785 552 760 572Z" fill="#3e4240"/>
            <path d="M738 590L864 692L835 548H813Q785 552 760 572Z" fill="url(#faceI)"/>
            <path d="M808 527L834 545V549H813Q795 549 775 560L808 532Z" fill="#848a88"/>
            <path d="M801 454L804 457L774 483Q753 502 743 515Q726 538 728 549Q735 557 748 554Q775 547 808 531L760 572L690 630L615 691Q575 714 538 721H504Q500 714 501 699L637 587L688 542L774 475Z" fill="#505553"/>
            <path d="M803 457L774 480L690 546L637 591L501 705" fill="none"/>
            <path d="M729 549Q740 554 774 541L808 527V532Q775 547 748 555Q732 558 729 549Z" fill="#6a706e"/>
            <path d="M922 540.500L969 526L1034 540.500Z" fill="#666c6a"/><path d="M969 526L983 540" fill="none"/>
            <path d="M1161 454L1216 502Q1237 521 1254 537V552H1165L1176 530Q1186 512 1185 493Q1181 473 1159 458Z" fill="#6d7371"/>
            <path d="M1163 456Q1187 480 1185 512" fill="none"/>
            <path d="M1095 538L1154 526L1238 541V552H1170Z" fill="#555b59"/><path d="M1154 526V550" fill="none"/>
            <path d="M1575 454Q1570 478 1548 497Q1500 531 1403 547Q1370 550 1337 550L1177 705Q1210 715 1260 721H1480Q1535 715 1579 705V700Q1595 640 1593 573Q1591 510 1575 454Z" fill="#636967"/>
            <path d="M1192 695Q1262 713 1345 717H1456Q1520 711 1579 700" fill="none"/>
            <path d="M1188 695Q1260 714 1345 717L1330 721Q1260 717 1177 700Z" fill="#484d4c"/>
            <path d="M1182 699L1280 717L1260 721L1177 704Z" fill="#74807f"/>
            <path d="M1277 717H1310L1320 721H1262Z" fill="#8e9795"/>
            <path d="M904 546L925 687L1082 527L1034 544Z" fill="url(#faceO)"/>
            <path d="M925 685Q957 707 1015 717H1088Q1140 710 1177 700V705Q1140 716 1100 721H1003Q955 712 925 692Z" fill="#4f5452"/>
            <path d="M1415 454Q1385 482 1335 508Q1290 531 1238 543Q1200 551 1170 550Q1125 546 1104 536L1082 527L925 685Q957 707 1015 717H1088Q1140 710 1177 700L1337 546L1417 457Z" fill="#3a3e3d"/>
            <path d="M1415 454L1417 457L1337 550L1177 705V700L1332 548Z" fill="#565c5a"/>
          </g>
          <g clip-path="url(#clipD)"><ellipse cx="506" cy="607" rx="7" ry="32" transform="rotate(32 506 607)" fill="#fff" filter="url(#soft)"/><path d="M462 684Q505 625 545 588" stroke="#a9afad" stroke-width="4" fill="none" filter="url(#glow)"/><path d="M545 585Q580 556 628 545" stroke="#343938" stroke-width="6" fill="none" filter="url(#glow)"/><ellipse cx="570" cy="545" rx="18" ry="7" fill="#3a3f3e" filter="url(#soft)"/></g>
          <ellipse cx="596" cy="577" rx="11" ry="20" transform="rotate(12 596 577)" fill="#fff" filter="url(#glow)"/>
          <g clip-path="url(#clipO)"><path d="M965 560L1040 552L1030 568Z" fill="#2f3333" filter="url(#soft)"/><path d="M945 550L955 670" stroke="#7b8280" stroke-width="8" filter="url(#soft)"/></g>
        </svg>

        <div class="docbtns"><button aria-label="Tile windows"><svg viewBox="0 0 12 12"><path d="M.5 1.500H11.500V10.500H.5ZM6.500 1V11M7 5.500H11" stroke="#333" fill="none"/></svg></button><button aria-label="Close view"><svg><use href="#cross"/></svg></button></div>
        <button class="viewcube"><span>RIGHT</span></button>

        <div class="navbar">
          <button class="tiny" aria-label="Close bar"><svg viewBox="0 0 8 8"><circle cx="4" cy="4" r="3" fill="none" stroke="#999"/><path d="M3 3L5 5M5 3L3 5" stroke="#999"/></svg></button>
          <button class="n24" aria-label="Wheel"><svg viewBox="0 0 24 24" fill="none" stroke="#8b8f96"><path d="M12 2H20Q22 2 22 4V12A10 10 0 1 1 12 2Z"/><circle cx="12" cy="12" r="8"/><circle cx="12" cy="12" r="5"/><path d="M6 18L9 15M18 18L15 15"/></svg></button>
          <svg class="nc"><use href="#caret"/></svg><hr>
          <button class="n28" aria-label="Pan"><svg viewBox="0 0 24 24" fill="#fafafa" stroke="#8b8f96" stroke-width="1.300"><path d="M8 22Q6 17 2 13Q0 10 3 11L7 14L4 5Q4 2 6 4L9 11L9 3Q10 0 12 3L12 11L15 3Q17 1 17 4L16 12L20 7Q23 6 22 8L17 22Z"/></svg></button>
          <button class="n28" aria-label="Zoom"><svg viewBox="0 0 24 24" fill="none" stroke="#8b8f96"><path d="M4 1h3v3h4v3H7v4H4V7H0V4h4zM0 14h10v2H0z" fill="#d6d8dc"/><circle cx="16" cy="16" r="5"/><path d="M20 20L24 23" stroke-width="2.500"/></svg></button>
          <svg class="nc"><use href="#caret"/></svg>
          <button class="n28" aria-label="Orbit"><svg viewBox="0 0 24 24" fill="none" stroke="#8b8f96" stroke-width="1.400"><ellipse cx="12" cy="12" rx="4" ry="10.500"/><ellipse cx="12" cy="12" rx="11" ry="4"/><path d="M9 12H15M12 9V15M14 4L16 8L19 5M21 10L24 12L21 15"/></svg></button>
          <svg class="nc"><use href="#caret"/></svg>
          <button class="n28" aria-label="Look at"><svg viewBox="0 0 24 24" fill="#eceef0" stroke="#8b8f96"><path d="M0.500 8.500H23.500V22.500H.5ZM5 12H19V18H5ZM1 7L8 2L8 6L16 3V7"/></svg></button>
          <button class="n20" aria-label="View face"><svg viewBox="0 0 16 16" fill="none" stroke="#888"><path d="M.5 4V.5H4M12 .5H15.500V4M15.500 12V15.500H12M4 15.500H.5V12"/><path d="M4 8H15" stroke="#444"/><path d="M6 5V11L2 8Z" fill="#444" stroke="none"/></svg></button>
          <button class="n20" aria-label="Visual style"><svg viewBox="0 0 16 16" fill="#f4f4f4" stroke="#8b8f96"><path d="M.5 5.500L5 .5H15.500V10L10.500 15.500H.5ZM.5 5.500H10.500V15.500M10.500 5.500L15.500 .5M.5 10H5V15"/></svg></button>
          <svg class="nc"><use href="#caret"/></svg>
          <button class="n20" aria-label="Shading"><svg viewBox="0 0 16 16"><path d="M5 9L8 3H15.500V11L12 14.500H5Z" fill="#eee" stroke="#8b8f96"/><circle cx="5" cy="5" r="4.500" fill="#bdd0ee" stroke="#7d95c0"/></svg></button>
          <svg class="nc"><use href="#caret"/></svg>
          <button class="tiny" aria-label="Options"><svg viewBox="0 0 8 8"><circle cx="4" cy="4" r="3" fill="none" stroke="#999"/><path d="M2 4H6" stroke="#999"/></svg></button>
        </div>

        <svg class="triad" viewBox="0 0 60 56" role="img" aria-label="Axis triad"><text x="8" y="12" fill="#33f">Z</text><path d="M11.500 42V20" stroke="#0000b4"/><path d="M6 25L11.500 15L17 25Z" fill="#000090"/><path d="M12 43H32" stroke="#00a000"/><path d="M31 37L42 43L31 49Z" fill="#008c00"/><circle cx="11.500" cy="43" r="6" fill="#b00000"/><path d="M9 40L14 46M14 40L9 46" stroke="#e22"/><text x="44" y="47" fill="#3f3">Y</text></svg>
      </div>
      <div class="doctabs"><button class="doctab">AXIAL FAN - KE...ipt <svg><use href="#cross"/></svg></button><button class="menu" aria-label="Document list"><svg><use href="#burger"/></svg></button></div>
    </section>

    <aside class="side-panel">
      <div class="ptabs"><button class="ptab">Properties</button><button class="ptab on">Model <svg><use href="#cross"/></svg></button><button class="padd" aria-label="Add panel"><svg><use href="#plus"/></svg></button><span class="grow"></span><button class="pfind" aria-label="Search"><svg viewBox="0 0 14 14"><circle cx="6" cy="6" r="5" fill="none" stroke="#8f8f8f" stroke-width="1.300"/><path d="M10 10L13 13" stroke="#8f8f8f" stroke-width="1.500"/></svg></button><button class="menu grey" aria-label="Panel menu"><svg><use href="#burger"/></svg></button></div>
      <div class="tree">
        <div class="root"><svg><use href="#part"/></svg>AXIAL FAN - KEMAO TFE710-120</div>
        <ul>
          <li><svg class="ex"><use href="#plus"/></svg><svg><use href="#solid"/></svg>Solid Bodies(1)</li>
          <li><svg class="ex"><use href="#plus"/></svg><svg><use href="#view"/></svg>View: Master</li>
          <li><svg class="ex"><use href="#plus"/></svg><svg><use href="#folder"/></svg>Origin</li>
          <li><svg class="ex"><use href="#plus"/></svg><svg><use href="#extrusion"/></svg>Extrusion1</li>
          <li><svg class="ex"><use href="#plus"/></svg><svg><use href="#extrusion"/></svg>Extrusion2</li>
          <li><svg class="ex"><use href="#plus"/></svg><svg><use href="#circ"/></svg>Circular Pattern1</li>
          <li><svg class="ex"><use href="#plus"/></svg><svg><use href="#extrusion"/></svg>Extrusion3</li>
          <li><svg class="ex"><use href="#plus"/></svg><svg><use href="#extrusion"/></svg>Extrusion4</li>
          <li><svg class="ex"><use href="#plus"/></svg><svg><use href="#extrusion"/></svg>Extrusion5</li>
          <li><svg class="ex"><use href="#plus"/></svg><svg><use href="#extrusion"/></svg>Extrusion6</li>
          <li><svg class="ex"><use href="#plus"/></svg><svg><use href="#extrusion"/></svg>Extrusion9</li>
          <li><svg class="ex"><use href="#plus"/></svg><svg><use href="#extrusion"/></svg>Extrusion10</li>
          <li><svg class="ex"><use href="#plus"/></svg><svg><use href="#extrusion"/></svg>Extrusion11</li>
          <li><svg class="ex"><use href="#plus"/></svg><svg><use href="#loft"/></svg>Loft1</li>
          <li><svg class="ex"><use href="#plus"/></svg><svg><use href="#circ"/></svg>Circular Pattern3</li>
          <li><svg class="ex"><use href="#plus"/></svg><svg><use href="#extrusion"/></svg>Extrusion12</li>
          <li><span class="ex none"></span><svg><use href="#end"/></svg>End of Part</li>
        </ul>
      </div>
      <div class="ptabs"><button class="ptab on">iLogic <svg><use href="#cross"/></svg></button><button class="padd" aria-label="Add panel"><svg><use href="#plus"/></svg></button><span class="grow"></span><button class="menu grey" aria-label="Panel menu"><svg><use href="#burger"/></svg></button></div>
      <div class="ilogic">
        <div class="itabs"><button>Rules</button><button class="on">Forms</button><button>Global Forms</button><button>External Rules</button></div>
        <div class="ipage"></div>
      </div>
    </aside>
  </main>

  <footer class="status"><span class="ready">Ready</span><span class="cell">1</span><span class="cell">1</span></footer>
  <div class="taskbar"><span class="task"></span><span class="task task-dim"></span></div>
</div>
</body>
</html>
```
FILE: styles.css
```css
* { box-sizing: border-box; }
html, body { margin: 0; height: 100%; }
body { font: 12px/16px "Open Sans", "Noto Sans", sans-serif; color: #eef0f2; background: #222933; overflow: hidden; }
button { font: inherit; color: inherit; background: none; border: 0; padding: 0; margin: 0; white-space: nowrap; }
svg { display: block; flex: none; }
.defs { position: absolute; width: 0; height: 0; }
.app { display: flex; flex-direction: column; height: 100vh; }

/* Title bar */
.titlebar { position: relative; display: grid; grid-template-columns: 859px 1fr 493px; align-items: center; height: 24px; background: repeating-linear-gradient(135deg, #2e3440 0 2px, #313744 2px 4px); }
.topstrip { position: absolute; top: 0; left: 840px; width: 241px; height: 1px; background: linear-gradient(90deg, #c00000 48px, #e8e8e8 48px); }
.quick, .account { display: flex; align-items: center; height: 24px; }
.logo { width: 10px; height: 16px; margin: 0 10px 0 9px; }
.q { display: flex; align-items: center; justify-content: center; width: 24px; height: 24px; }
.i16 { width: 16px; height: 16px; }
.i14 { width: 14px; height: 14px; }
.i12 { width: 12px; height: 12px; }
.dim { opacity: .8; }
.drop { display: flex; justify-content: center; width: 12px; }
.drop svg, .dropcaret { width: 5px; height: 3px; }
.vr { width: 1px; height: 22px; margin: 0 3px; background: #5a616d; }
.combo { position: relative; display: flex; align-items: center; width: 100px; height: 22px; padding-left: 4px; background: #3b4453; }
.combo select { appearance: none; width: 80px; padding: 0 0 0 4px; font: inherit; color: inherit; background: none; border: 0; }
.combo-b select { width: 68px; padding-left: 3px; overflow: hidden; text-overflow: clip; }
.combo-caret { position: absolute; right: 3px; top: 9px; width: 7px; height: 4px; }
.ball { width: 14px; height: 14px; }
.fx { font: italic 18px/20px "Liberation Serif", serif; }
.more { width: 20px; }
.more svg { width: 8px; height: 7px; }
.titles { display: flex; gap: 14px; font-size: 11px; white-space: nowrap; }
.account { justify-content: flex-end; }
.tri { width: 4px; height: 8px; margin-right: 3px; }
.search { width: 180px; height: 19px; margin: 0 6px 0 0; padding: 0 5px; border: 0; font: inherit; color: #eef0f2; background: #3b4453; }
.search::placeholder { color: #eef0f2; opacity: 1; }
.signin { display: flex; align-items: center; gap: 6px; width: 115px; padding-right: 6px; }
.signin .dropcaret { margin-left: auto; }
.help { width: 16px; height: 16px; margin: 0 2px 0 6px; border-radius: 8px; background: #eef0f4; color: #2a50a0; font-weight: 700; line-height: 16px; }
.win { display: flex; justify-content: center; width: 25px; }
.win-min { margin-left: 42px; }
.win svg { width: 12px; height: 12px; }

/* Ribbon tabs */
.tabs { display: grid; grid-template-columns: 45px 69px 55px 70px 57px 47px 63px 45px 93px 78px 81px 64px 82px 58px; height: 24px; padding: 4px 0 0 1px; background: #222933; color: #a4a8ae; }
.tabs .file { background: #f28526; color: #fff; }
.tabs .on { margin-left: 3px; margin-right: -3px; background: #3b4453; color: #fff; }
.tabs button + button + button { padding-left: 8px; }
.tabs .mini { display: flex; align-items: center; gap: 7px; padding-left: 24px; }
.mini-box { width: 14px; height: 8px; }
.mini-caret { width: 5px; height: 3px; }

/* Ribbon */
.ribbon { display: flex; height: 96px; padding-top: 3px; background: #3b4453; border-bottom: 1px solid #222933; white-space: nowrap; }
.group { display: flex; flex-direction: column; height: 92px; border-right: 1px solid #222933; }
.body { display: grid; height: 72px; }
.group h2 { display: flex; align-items: center; justify-content: center; gap: 7px; height: 20px; margin: 0; font-size: 12px; font-weight: 400; color: #a4a8ae; }
.title-caret { width: 7px; height: 4px; }
.big { position: relative; display: flex; flex-direction: column; align-items: center; gap: 3px; padding-top: 3px; line-height: 15px; }
.big > svg { width: 32px; height: 32px; }
.big .side { position: absolute; right: 5px; bottom: 15px; width: 5px; height: 3px; }
.big .under { width: 5px; height: 3px; }
.tools { display: flex; flex-direction: column; }
.tools button { display: flex; align-items: center; gap: 5px; height: 24px; }
.tools button > svg { width: 16px; height: 16px; }
.tools button > svg.dropcaret { width: 5px; height: 3px; margin-left: 3px; }
.pad { padding-left: 7px; }
.tight { padding-left: 2px; }
.g-sketch { width: 81px; }
.g-create { width: 307px; }
.g-create .body { grid-template-columns: 50px 43px 72px 72px 1fr; }
.g-modify { width: 361px; }
.g-modify .body { grid-template-columns: 42px 34px 84px 112px 1fr; }
.g-explore { width: 63px; }
.g-work { width: 127px; }
.g-work .body { grid-template-columns: 56px 1fr; }
.g-pattern { width: 172px; }
.g-pattern .body { grid-template-columns: 110px 1fr; }
.g-free { width: 120px; }
.g-free .body { grid-template-columns: 46px 1fr; }
.g-surface { width: 275px; }
.g-surface .body { grid-template-columns: 71px 103px 1fr; }
.g-sim { width: 68px; }
.g-conv { width: 73px; }

/* Work area */
.work { display: grid; grid-template-columns: 1fr 268px; gap: 4px; flex: 1; min-height: 0; background: #1b2028; }
.left { display: flex; flex-direction: column; min-width: 0; min-height: 0; }
.canvas { position: relative; flex: 1; min-height: 0; background: #fff; overflow: hidden; }
.fan { width: 100%; height: 100%; }
.docbtns { position: absolute; top: 6px; right: 1px; display: flex; gap: 9px; color: #333; }
.docbtns svg { width: 12px; height: 12px; }
.viewcube { position: absolute; top: 59px; right: 35px; width: 54px; height: 54px; padding: 9px; border: 1px solid #8a8a8a; background: linear-gradient(90deg, #e6e6e6, #f4f4f4); box-shadow: -5px 0 4px -2px #bbb; }
.viewcube span { display: block; width: 34px; height: 34px; background: #e0e2e5; writing-mode: vertical-rl; color: #9b9ea3; font: 700 12px/34px "Open Sans", sans-serif; text-align: center; }
.navbar { position: absolute; top: 144px; right: 1px; display: flex; flex-direction: column; align-items: center; width: 35px; height: 324px; padding-top: 2px; border: 2px solid #bcbcbc; border-radius: 5px; background: #f4f4f4; }
.navbar hr { width: 26px; margin: 0 0 1px; border: 0; border-top: 1px solid #bbb; }
.navbar button { display: flex; align-items: center; justify-content: center; flex: none; }
.navbar .tiny { align-self: flex-end; margin-right: 2px; height: 10px; }
.tiny svg { width: 8px; height: 8px; }
.n24 { height: 38px; }
.n24 svg, .n28 svg { width: 24px; height: 24px; }
.n28 { height: 32px; }
.n20 { height: 25px; }
.n20 svg { width: 16px; height: 16px; }
.nc { width: 5px; height: 3px; margin: 4px 0 3px; filter: brightness(.6); }
.triad { position: absolute; left: 41px; bottom: 40px; width: 60px; height: 56px; font: 12px "Open Sans", sans-serif; }
.doctabs { display: flex; justify-content: space-between; height: 24px; background: #222933; }
.doctab { display: flex; align-items: center; gap: 7px; width: 140px; padding: 0 0 2px 8px; border-bottom: 3px solid #2ba3dc; background: #3b4453; }
.doctab svg { width: 10px; height: 10px; color: #b0b6bf; }
.menu { display: flex; align-items: center; padding-right: 5px; color: #a9b0bb; }
.menu svg { width: 14px; height: 12px; }
.grey { color: #8f8f8f; }

/* Browser panels */
.side-panel { display: flex; flex-direction: column; min-height: 0; font-size: 11px; }
.ptabs { display: flex; height: 24px; flex: none; background: #222933; }
.ptab { display: flex; align-items: center; padding: 0 2px; color: #a4a8ae; }
.ptab.on { gap: 6px; padding: 0 5px 0 4px; background: #3b4453; color: #fff; }
.ptab svg { width: 12px; height: 12px; color: #e0e3e6; }
.padd { padding: 0 5px; color: #8f8f8f; }
.padd svg { width: 11px; height: 11px; }
.grow { flex: 1; }
.pfind { padding-right: 8px; }
.pfind svg { width: 14px; height: 14px; }
.tree { flex: 1; padding-top: 2px; margin-bottom: 4px; background: #3b4453; white-space: nowrap; }
.root { display: flex; align-items: center; gap: 3px; height: 20px; padding-left: 3px; }
.root svg, .tree li svg { width: 16px; height: 16px; }
.tree ul { list-style: none; margin: 0; padding: 0; background: repeating-linear-gradient(#8d949e 0 1px, transparent 1px 3px) 9px 0 / 1px 330px no-repeat; }
.tree li { display: flex; align-items: center; gap: 2px; height: 20px; padding-left: 4px; }
.tree li .ex { width: 10px; height: 10px; margin-right: 3px; color: #d4dde8; }
.tree li .none { width: 5px; height: 1px; margin: 0 3px 0 5px; border-top: 1px dotted #8d949e; }
.ilogic { display: flex; flex-direction: column; height: 217px; padding: 2px 4px 3px 2px; background: #f0f0f0; color: #000; }
.itabs { display: flex; align-items: flex-end; padding-left: 2px; height: 21px; }
.itabs button { height: 18px; padding: 0 3px; border: 1px solid #d9d9d9; border-bottom: 0; border-left-width: 0; line-height: 14px; }
.itabs button:first-child { border-left-width: 1px; padding: 0 8px 0 4px; }
.itabs .on { height: 21px; margin-bottom: -1px; padding: 0 6px 2px; background: #fff; z-index: 1; }
.ipage { flex: 1; border: 1px solid #d9d9d9; background: #fff; }

/* Status and task bar */
.status { display: flex; align-items: center; height: 23px; background: #2e3440; }
.ready { flex: 1; padding-left: 1px; }
.cell { width: 40px; height: 21px; padding-left: 10px; border-left: 1px solid #d8d8d8; line-height: 20px; }
.cell:last-child { width: 39px; padding-left: 8px; border-right: 1px solid #d8d8d8; }
.taskbar { display: flex; height: 2px; padding-left: 48px; gap: 198px; background: #1c1c20; }
.task { width: 288px; background: #e6e6e6; }
.task-dim { width: 48px; background: #4c4c4e; }
```
